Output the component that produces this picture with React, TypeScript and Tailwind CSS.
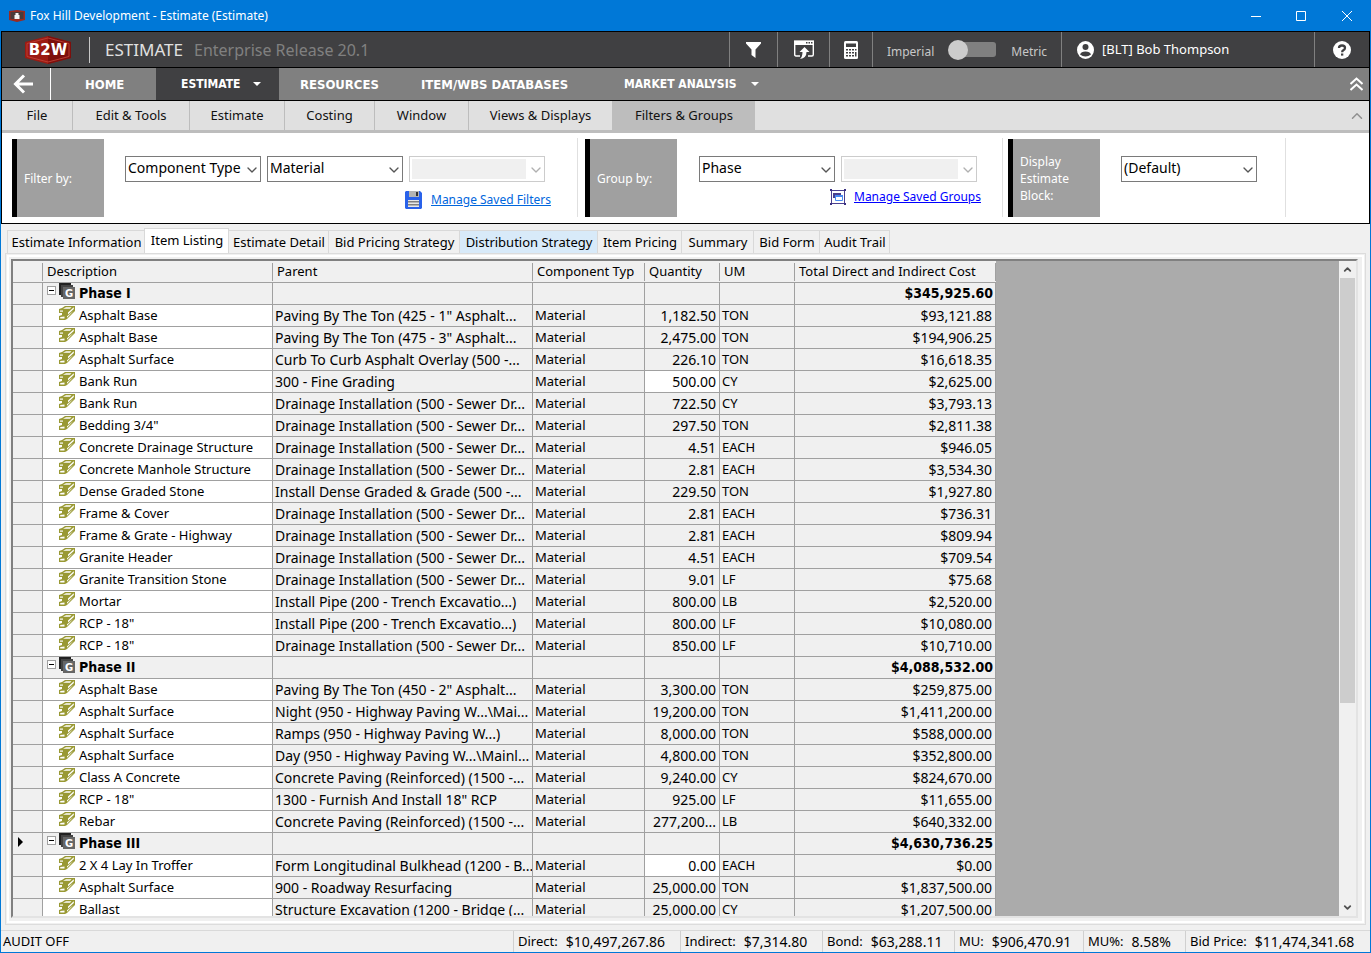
import type { ReactNode } from "react";
import { ChevronDown, ChevronUp } from "lucide-react";

type Item = {
  name: string;
  parent: string;
  qty: string;
  um: string;
  total: string;
  editable?: boolean;
};

type Phase = { name: string; total: string; current?: boolean; items: Item[] };

const SEWER = "Drainage Installation (500 - Sewer Dr...";

const PHASES: Phase[] = [
  {
    name: "Phase I",
    total: "$345,925.60",
    items: [
      { name: "Asphalt Base", parent: 'Paving By The Ton (425 - 1" Asphalt...', qty: "1,182.50", um: "TON", total: "$93,121.88" },
      { name: "Asphalt Base", parent: 'Paving By The Ton (475 - 3" Asphalt...', qty: "2,475.00", um: "TON", total: "$194,906.25" },
      { name: "Asphalt Surface", parent: "Curb To Curb Asphalt Overlay (500 -...", qty: "226.10", um: "TON", total: "$16,618.35" },
      { name: "Bank Run", parent: "300 - Fine Grading", qty: "500.00", um: "CY", total: "$2,625.00", editable: true },
      { name: "Bank Run", parent: SEWER, qty: "722.50", um: "CY", total: "$3,793.13" },
      { name: 'Bedding 3/4"', parent: SEWER, qty: "297.50", um: "TON", total: "$2,811.38" },
      { name: "Concrete Drainage Structure", parent: SEWER, qty: "4.51", um: "EACH", total: "$946.05" },
      { name: "Concrete Manhole Structure", parent: SEWER, qty: "2.81", um: "EACH", total: "$3,534.30" },
      { name: "Dense Graded Stone", parent: "Install Dense Graded & Grade (500 -...", qty: "229.50", um: "TON", total: "$1,927.80" },
      { name: "Frame & Cover", parent: SEWER, qty: "2.81", um: "EACH", total: "$736.31" },
      { name: "Frame & Grate - Highway", parent: SEWER, qty: "2.81", um: "EACH", total: "$809.94" },
      { name: "Granite Header", parent: SEWER, qty: "4.51", um: "EACH", total: "$709.54" },
      { name: "Granite Transition Stone", parent: SEWER, qty: "9.01", um: "LF", total: "$75.68" },
      { name: "Mortar", parent: "Install Pipe (200 - Trench Excavatio...)", qty: "800.00", um: "LB", total: "$2,520.00" },
      { name: 'RCP - 18"', parent: "Install Pipe (200 - Trench Excavatio...)", qty: "800.00", um: "LF", total: "$10,080.00" },
      { name: 'RCP - 18"', parent: SEWER, qty: "850.00", um: "LF", total: "$10,710.00" },
    ],
  },
  {
    name: "Phase II",
    total: "$4,088,532.00",
    items: [
      { name: "Asphalt Base", parent: 'Paving By The Ton (450 - 2" Asphalt...', qty: "3,300.00", um: "TON", total: "$259,875.00" },
      { name: "Asphalt Surface", parent: "Night (950 - Highway Paving W...\\Mai...", qty: "19,200.00", um: "TON", total: "$1,411,200.00" },
      { name: "Asphalt Surface", parent: "Ramps (950 - Highway Paving W...)", qty: "8,000.00", um: "TON", total: "$588,000.00" },
      { name: "Asphalt Surface", parent: "Day (950 - Highway Paving W...\\Mainl...", qty: "4,800.00", um: "TON", total: "$352,800.00" },
      { name: "Class A Concrete", parent: "Concrete Paving (Reinforced) (1500 -...", qty: "9,240.00", um: "CY", total: "$824,670.00" },
      { name: 'RCP - 18"', parent: '1300 - Furnish And Install 18" RCP', qty: "925.00", um: "LF", total: "$11,655.00" },
      { name: "Rebar", parent: "Concrete Paving (Reinforced) (1500 -...", qty: "277,200...", um: "LB", total: "$640,332.00" },
    ],
  },
  {
    name: "Phase III",
    total: "$4,630,736.25",
    current: true,
    items: [
      { name: "2 X 4 Lay In Troffer", parent: "Form Longitudinal Bulkhead (1200 - B...", qty: "0.00", um: "EACH", total: "$0.00", editable: true },
      { name: "Asphalt Surface", parent: "900 - Roadway Resurfacing", qty: "25,000.00", um: "TON", total: "$1,837,500.00" },
      { name: "Ballast", parent: "Structure Excavation (1200 - Bridge (...", qty: "25,000.00", um: "CY", total: "$1,207,500.00" },
    ],
  },
];

const RIBBON = [
  { label: "File", width: "w-[71px]" },
  { label: "Edit & Tools", width: "w-[117px]" },
  { label: "Estimate", width: "w-[95px]" },
  { label: "Costing", width: "w-[90px]" },
  { label: "Window", width: "w-[94px]" },
  { label: "Views & Displays", width: "w-[144px]" },
];

const TABS = [
  { label: "Estimate Detail", width: "w-[100px]" },
  { label: "Bid Pricing Strategy", width: "w-[131px]" },
  { label: "Distribution Strategy", width: "w-[138px]", hot: true },
  { label: "Item Pricing", width: "w-[84px]" },
  { label: "Summary", width: "w-[72px]" },
  { label: "Bid Form", width: "w-[66px]" },
  { label: "Audit Trail", width: "w-[70px]" },
];

const TOTALS = [
  { label: "Direct:", value: "$10,497,267.86", width: "w-[167px]" },
  { label: "Indirect:", value: "$7,314.80", width: "w-[142px]" },
  { label: "Bond:", value: "$63,288.11", width: "w-[132px]" },
  { label: "MU:", value: "$906,470.91", width: "w-[129px]" },
  { label: "MU%:", value: "8.58%", width: "w-[102px]" },
  { label: "Bid Price:", value: "$11,474,341.68", width: "w-[185px]" },
];

function Logo() {
  return (
    <svg width="48" height="28" viewBox="0 0 48 28" aria-label="B2W">
      <path d="M24 0 L47 6 V22 L24 28 L1 22 V6 Z" fill="#9c1a12" />
      <path d="M24 0 L47 6 V22 L24 28 Z" fill="#7d0f0c" />
      <path d="M24 2 L45 7.500 V20.500 L24 26 L3 20.500 V7.500 Z" fill="none" stroke="#c4463a" strokeWidth="0.8" />
      <text x="24" y="19" textAnchor="middle" fontSize="15" fontWeight="700" fill="#fff" fontFamily="DejaVu Sans, sans-serif">
        B2W
      </text>
    </svg>
  );
}

function MaterialIcon() {
  return (
    <svg width="16" height="14" viewBox="0 0 16 14" className="shrink-0">
      <path d="M3 2 L6 0 H16 V5 L8 13 L6 14 H0 V10 L3 9 V7 H0 V3 Z" fill="#999933" />
      <path d="M4 2.700 L7 1.200 H12.500 L11 2.700 Z" fill="#fff" />
      <path d="M14.800 1.200 V3 L9 8.500 V6.500 Z" fill="#fff" />
      <path d="M14.800 4.700 L8 11.800 V10.300 Z" fill="#fff" />
      <path d="M1.200 11 L5.500 10.500 V12.500 H1.200 Z" fill="#fff" />
      <path d="M1 4.500 H4 V5.700 H1 Z" fill="#fff" />
    </svg>
  );
}

function GroupIcon() {
  return (
    <svg width="16" height="16" viewBox="0 0 16 16" className="shrink-0">
      <path d="M0 0 H12 V12 H0 Z" fill="#222" />
      <path d="M2 2 H14 V14 H2 Z" fill="#444" />
      <path d="M4 4 H16 V16 H4 Z" fill="#666" />
      <text x="10" y="14" textAnchor="middle" fontSize="10" fontWeight="700" fill="#fff" fontFamily="DejaVu Sans, sans-serif">
        G
      </text>
    </svg>
  );
}

function Caret() {
  return (
    <svg width="8" height="4" viewBox="0 0 8 4" fill="#fff">
      <path d="M0 0 H8 L4 4 Z" />
    </svg>
  );
}

function Combo({ label, value, disabled }: { label: string; value?: string; disabled?: boolean }) {
  return (
    <div
      className={`relative h-[26px] w-[136px] border bg-white ${disabled ? "border-[#cccccc] p-[2px]" : "border-[#7a7a7a]"}`}
    >
      <select
        aria-label={label}
        disabled={disabled}
        className={`block h-full appearance-none pl-[2px] text-[14px] leading-5 outline-none ${
          disabled ? "w-[114px] bg-[#f0f0f0]" : "w-full bg-white pb-[2px] text-black"
        }`}
      >
        <option>{value}</option>
      </select>
      <ChevronDown
        size={16}
        strokeWidth={2}
        className={`pointer-events-none absolute right-0 top-[5px] ${disabled ? "text-[#b0b0b0]" : "text-[#555555]"}`}
      />
    </div>
  );
}

function BlockLabel({ children }: { children: ReactNode }) {
  return (
    <div className="flex h-[78px] w-[92px] shrink-0 items-center border-l-[5px] border-black bg-[#a0a0a0] pl-[7px] pr-4 text-[12px] leading-[17px] text-white">
      {children}
    </div>
  );
}

function HeaderCell({ children }: { children?: ReactNode }) {
  return (
    <th className="border-b border-[#a0a0a0] p-0 text-left align-top font-normal">
      <div className="mt-[2px] h-[18px] overflow-hidden whitespace-nowrap border-r border-[#a0a0a0] pl-1 leading-[17px]">{children}</div>
    </th>
  );
}

const cell = "overflow-hidden whitespace-nowrap border-b border-r border-[#a0a0a0] p-0";

function PhaseRows({ phase }: { phase: Phase }) {
  return (
    <>
      <tr className="h-[22px] font-['DejaVu_Sans_Condensed','DejaVu_Sans',sans-serif] text-[14px] font-bold">
        <td className={cell}>
          {phase.current && (
            <svg width="5" height="10" viewBox="0 0 5 10" className="mb-[3px] ml-[5px]">
              <path d="M0 0 L5 5 L0 10 Z" />
            </svg>
          )}
        </td>
        <td className={cell}>
          <div className="flex h-[21px] items-start pl-1">
            <button
              aria-label={`Collapse ${phase.name}`}
              className="mt-[3px] flex h-[9px] w-[9px] items-center justify-center border border-[#a0a0a0] bg-white"
            >
              <span className="h-px w-[5px] bg-black" />
            </button>
            <span className="ml-[3px]">
              <GroupIcon />
            </span>
            <span className="ml-1 leading-[21px]">{phase.name}</span>
          </div>
        </td>
        <td className={cell} />
        <td className={cell} />
        <td className={cell} />
        <td className={cell} />
        <td className={`${cell} pr-[2px] text-right`}>{phase.total}</td>
      </tr>
      {phase.items.map((item, i) => (
        <tr key={i} className="h-[22px]">
          <td className={cell} />
          <td className={`${cell} bg-white`}>
            <div className="flex h-[21px] items-start pl-4">
              <span className="mt-px">
                <MaterialIcon />
              </span>
              <span className="ml-1 leading-[21px]">{item.name}</span>
            </div>
          </td>
          <td className={`${cell} pl-[2px] text-[14px]`}>{item.parent}</td>
          <td className={`${cell} pl-[2px]`}>Material</td>
          <td className={`${cell} pr-[3px] text-right text-[14px] ${item.editable ? "bg-white" : ""}`}>{item.qty}</td>
          <td className={`${cell} pl-[2px]`}>{item.um}</td>
          <td className={`${cell} pr-[3px] text-right text-[14px]`}>{item.total}</td>
        </tr>
      ))}
    </>
  );
}

function TitleBar() {
  return (
    <header className="flex h-[31px] shrink-0 items-center bg-[#0078d7] pl-2 text-[12px] text-white">
      <svg width="16" height="12" viewBox="0 0 16 12">
        <path d="M0 1 L8 0 L16 1 V10 L8 12 L0 10 Z" fill="#9b2a20" />
        <path d="M1.500 2 H14.500 V9 H1.500 Z" fill="#4a3a3a" />
        <path d="M5.500 5 H10.500 V9 H5.500 Z M6.500 3 H9.500 V5 H6.500 Z" fill="#f4f4f4" />
      </svg>
      <h1 className="ml-[5px] flex-1">Fox Hill Development - Estimate (Estimate)</h1>
      <div className="flex">
        <button aria-label="Minimize" className="flex h-[30px] w-[45px] items-center justify-center">
          <svg width="10" height="10" stroke="#fff">
            <path d="M0 5.500 H10" />
          </svg>
        </button>
        <button aria-label="Maximize" className="flex h-[30px] w-[46px] items-center justify-center">
          <svg width="10" height="10" stroke="#fff" fill="none">
            <path d="M0.500 0.500 H9.500 V9.500 H0.500 Z" />
          </svg>
        </button>
        <button aria-label="Close" className="flex h-[30px] w-[46px] items-center justify-center">
          <svg width="10" height="10" stroke="#fff">
            <path d="M0 0 L10 10 M10 0 L0 10" />
          </svg>
        </button>
      </div>
    </header>
  );
}

function ProductBar() {
  const divider = "flex items-center justify-center border-l border-[#808080]";
  return (
    <div className="flex h-[37px] shrink-0 border-y border-black bg-[#404042] text-[#e0e0e0]">
      <div className="flex flex-1 items-center pl-[22px]">
        <Logo />
        <div className="ml-[17px] h-[26px] w-px bg-[#c8c8c8]" />
        <span className="ml-[15px] text-[17px]">ESTIMATE</span>
        <span className="ml-[11px] text-[16px] text-[#808080]">Enterprise Release 20.1</span>
      </div>
      <button aria-label="Filter" className={`${divider} w-[48px]`}>
        <svg width="15" height="16" viewBox="0 0 15 16" fill="#fff">
          <path d="M0 0 H15 V1.500 L9.500 7.500 V16 L5.500 13 V7.500 L0 1.500 Z" />
        </svg>
      </button>
      <button aria-label="Switch window" className={`${divider} w-[52px]`}>
        <svg width="20" height="19" viewBox="0 0 20 19">
          <path d="M6 16 H2 Q0.700 16 0.700 14.500 V1.500 H19.300 V14.500 Q19.300 16 18 16 H14" fill="none" stroke="#fff" strokeWidth="1.4" />
          <path d="M0 0.500 H20 V5 H0 Z" fill="#fff" />
          <path d="M12 2 H13.500 V3.500 H12 Z M14.500 2 H16 V3.500 H14.500 Z M17 2 H18.500 V3.500 H17 Z" fill="#404042" />
          <path d="M10.500 7 L15.500 12 H12.500 Q12.500 18 6 19 Q8.500 17 8.500 12 H5.500 Z" fill="#fff" />
        </svg>
      </button>
      <button aria-label="Calculator" className={`${divider} w-[43px]`}>
        <svg width="14" height="18" viewBox="0 0 14 18">
          <rect width="14" height="18" rx="1.5" fill="#fff" />
          <path
            d="M2 2.500 H12 V6 H2 Z M2 8 H4 V9.500 H2 Z M5 8 H7 V9.500 H5 Z M8 8 H10 V9.500 H8 Z M2 11 H4 V12.500 H2 Z M5 11 H7 V12.500 H5 Z M8 11 H10 V12.500 H8 Z M2 14 H4 V15.500 H2 Z M5 14 H7 V15.500 H5 Z M8 14 H10 V15.500 H8 Z M11 8 H12.500 V9.500 H11 Z M11 11 H12.500 V15.500 H11 Z"
            fill="#404042"
          />
        </svg>
      </button>
      <div className={`${divider} w-[189px] text-[12px] text-[#c8c8c8]`}>
        <span className="pt-1">Imperial</span>
        <button role="switch" aria-checked={false} aria-label="Metric units" className="ml-[14px] mr-[15px] flex h-5 w-[48px] items-center">
          <span className="z-10 h-5 w-5 rounded-full bg-[#cccccc]" />
          <span className="-ml-3 h-[15px] flex-1 rounded-[3px] bg-[#808080]" />
        </button>
        <span className="pt-1">Metric</span>
      </div>
      <button className="flex w-[253px] items-center border-l border-[#808080] pl-[15px] text-white">
        <svg width="17" height="18" viewBox="0 0 17 18">
          <ellipse cx="8.500" cy="9" rx="8.500" ry="9" fill="#fff" />
          <circle cx="8.500" cy="6" r="3" fill="#404042" />
          <path d="M3 13.500 Q4 10.500 8.500 10.500 Q13 10.500 14 13.500 Q11.500 15.500 8.500 15.500 Q5.500 15.500 3 13.500 Z" fill="#404042" />
        </svg>
        <span className="ml-2 pt-px text-[13px]">[BLT] Bob Thompson</span>
      </button>
      <button aria-label="Help" className={`${divider} w-[55px]`}>
        <svg width="18" height="18" viewBox="0 0 18 18">
          <circle cx="9" cy="9" r="9" fill="#fff" />
          <path d="M6 7 Q6 4.500 9 4.500 Q12 4.500 12 7 Q12 8.500 10 9.500 Q9.200 10 9.200 11.300" fill="none" stroke="#404042" strokeWidth="2.300" />
          <path d="M8 12.500 H10.300 V14.600 H8 Z" fill="#404042" />
        </svg>
      </button>
    </div>
  );
}

function MainNav() {
  return (
    <nav className="flex h-[33px] shrink-0 items-center border-b border-black bg-[#808080] font-['DejaVu_Sans_Condensed','DejaVu_Sans',sans-serif] text-[13px] font-bold text-white">
      <button aria-label="Back" className="flex h-full w-[49px] items-center border-r border-white pl-[11px]">
        <svg width="20" height="20" viewBox="0 0 20 20" fill="none" stroke="#fff" strokeWidth="3">
          <path d="M20 10 H3 M11 1.500 L2.500 10 L11 18.500" />
        </svg>
      </button>
      <a href="#home" className="w-[105px] pl-[34px] pt-px">HOME</a>
      <a href="#estimate" className="flex h-full w-[123px] items-center bg-[#404042] pl-[25px] text-[12px]">
        <span className="w-[72px]">ESTIMATE</span>
        <Caret />
      </a>
      <a href="#resources" className="w-[142px] pl-[21px] pt-px">RESOURCES</a>
      <a href="#databases" className="w-[203px] whitespace-nowrap pt-px">ITEM/WBS DATABASES</a>
      <a href="#market" className="flex items-center text-[12px]">
        <span className="w-[127px] whitespace-nowrap">MARKET ANALYSIS</span>
        <Caret />
      </a>
      <button aria-label="Hide navigation" className="ml-auto mr-[6px]">
        <svg width="13" height="14" viewBox="0 0 13 14" fill="none" stroke="#fff" strokeWidth="2">
          <path d="M0.500 7 L6.500 1.500 L12.500 7 M0.500 13 L6.500 7.500 L12.500 13" />
        </svg>
      </button>
    </nav>
  );
}

function Ribbon() {
  return (
    <>
      <div className="flex h-8 shrink-0 border-b-[3px] border-[#bdbdbd] bg-[#e0e0e0] text-[13px] text-[#111111]">
        {RIBBON.map((tab) => (
          <button key={tab.label} className={`${tab.width} border-r border-[#bdbdbd]`}>
            {tab.label}
          </button>
        ))}
        <button className="w-[142px] bg-[#bdbdbd]">Filters & Groups</button>
        <button aria-label="Collapse ribbon" className="ml-auto mr-[3px]">
          <ChevronUp size={18} className="text-[#909090]" />
        </button>
      </div>
      <div className="flex h-[91px] shrink-0 border-b border-black bg-white pl-[10px] pt-[5px]">
        <div className="flex h-[79px] w-[566px] items-end border-r border-[#e0e0e0]">
          <BlockLabel>Filter by:</BlockLabel>
          <div className="ml-[21px] flex h-[61px] flex-col">
            <div className="flex gap-[6px]">
              <Combo label="Filter field" value="Component Type" />
              <Combo label="Filter value" value="Material" />
              <Combo label="Filter detail" disabled />
            </div>
            <div className="mt-2 flex items-center pl-[280px] text-[12px]">
              <svg width="17" height="18" viewBox="0 0 17 18">
                <path d="M1 0 H15 L17 2 V17 L16 18 H1 L0 17 V1 Z" fill="#2962ea" />
                <path d="M4 0 H14 V6 H4 Z" fill="#b4b4b4" />
                <path d="M11 1 H13 V5 H11 Z" fill="#333" />
                <path d="M3 9 H14 V16 H3 Z" fill="#e8e8e8" />
                <path d="M3 10 H14 V11.500 H3 Z M3 13 H14 V14.500 H3 Z" fill="#808080" />
              </svg>
              <a href="#filters" className="ml-[9px] pt-px text-[#0066dd] underline">Manage Saved Filters</a>
            </div>
          </div>
        </div>
        <div className="flex h-[79px] w-[425px] items-end border-r border-[#e0e0e0] pl-[7px]">
          <BlockLabel>Group by:</BlockLabel>
          <div className="ml-[22px] flex h-[61px] flex-col">
            <div className="flex gap-[6px]">
              <Combo label="Group field" value="Phase" />
              <Combo label="Group detail" disabled />
            </div>
            <div className="mt-[6px] flex items-center pl-[131px] text-[12px]">
              <svg width="16" height="16" viewBox="0 0 16 16" fill="none">
                <path d="M1.500 1.500 H14.500 V14.500 H1.500 Z" fill="#fff" stroke="#4a3f8f" />
                <path d="M0 0 H2 V2 H0 Z M14 0 H16 V2 H14 Z M0 14 H2 V16 H0 Z M14 14 H16 V16 H14 Z" fill="#3a2f80" />
                <path d="M3 4 H11 V9 H3 Z" fill="#4a3f8f" />
                <path d="M5.500 6.500 H12.500 V11.500 H5.500 Z" fill="#fff" stroke="#4a8af0" />
                <path d="M5 6 H13 V8 H5 Z" fill="#4a8af0" />
              </svg>
              <a href="#groups" className="ml-2 text-[#0000ff] underline">Manage Saved Groups</a>
            </div>
          </div>
        </div>
        <div className="flex h-[79px] w-[283px] items-end border-r border-[#e0e0e0] pl-[5px]">
          <BlockLabel>Display Estimate Block:</BlockLabel>
          <div className="ml-[21px] h-[61px]">
            <Combo label="Display estimate block" value="(Default)" />
          </div>
        </div>
      </div>
    </>
  );
}

function EstimateGrid() {
  return (
    <div className="flex min-h-0 flex-1 border-2 border-b-[#e3e3e3] border-l-[#808080] border-r-[#e3e3e3] border-t-[#808080] bg-[#ababab]">
      <div className="min-w-0 flex-1 overflow-hidden">
        <table className="w-[983px] table-fixed border-separate border-spacing-0 bg-[#f0f0f0] leading-[21px]">
          <colgroup>
            <col className="w-[30px]" />
            <col className="w-[230px]" />
            <col className="w-[260px]" />
            <col className="w-[112px]" />
            <col className="w-[75px]" />
            <col className="w-[75px]" />
            <col className="w-[201px]" />
          </colgroup>
          <thead>
            <tr className="h-[22px]">
              <HeaderCell />
              <HeaderCell>Description</HeaderCell>
              <HeaderCell>Parent</HeaderCell>
              <HeaderCell>Component Typ</HeaderCell>
              <HeaderCell>Quantity</HeaderCell>
              <HeaderCell>UM</HeaderCell>
              <HeaderCell>Total Direct and Indirect Cost</HeaderCell>
            </tr>
          </thead>
          <tbody>
            {PHASES.map((phase) => (
              <PhaseRows key={phase.name} phase={phase} />
            ))}
          </tbody>
        </table>
      </div>
      <div className="flex w-[17px] flex-col items-center bg-[#f0f0f0] text-[#505050]">
        <ChevronUp size={11} strokeWidth={4} className="my-[3px] shrink-0" />
        <div className="h-[425px] w-[15px] bg-[#cdcdcd]" />
        <ChevronDown size={11} strokeWidth={4} className="mb-[3px] mt-auto shrink-0" />
      </div>
    </div>
  );
}

export default function App() {
  return (
    <div className="flex h-screen flex-col overflow-hidden border-x border-b border-[#0078d7] bg-[#f0f0f0] font-['Noto_Sans',sans-serif] text-[13px] text-black">
      <TitleBar />
      <div className="shrink-0 border-x border-black">
        <ProductBar />
        <MainNav />
        <Ribbon />
      </div>

      <main className="flex min-h-0 flex-1 flex-col px-1 pt-1">
        <div role="tablist" className="flex h-[25px] shrink-0 items-end pl-[2px]">
          <button role="tab" className="h-[23px] w-[137px] whitespace-nowrap border-l border-t border-[#d9d9d9] pl-px pt-px">
            Estimate Information
          </button>
          <button role="tab" aria-selected className="h-[25px] w-[85px] whitespace-nowrap border-x border-t border-[#d9d9d9] bg-white pb-px pl-px">
            Item Listing
          </button>
          {TABS.map((tab) => (
            <button
              key={tab.label}
              role="tab"
              className={`${tab.width} h-[23px] whitespace-nowrap border-r border-t border-[#d9d9d9] pl-px pt-px ${tab.hot ? "bg-[#d8eaf9]" : ""}`}
            >
              {tab.label}
            </button>
          ))}
        </div>
        <div className="flex min-h-0 flex-1 flex-col border border-[#dcdcdc] bg-[#f0f0f0] p-px">
          <div className="flex min-h-0 flex-1 flex-col border-2 border-white pb-[3px] pl-[2px] pr-1 pt-[2px]">
            <EstimateGrid />
          </div>
        </div>
      </main>

      <footer className="mt-[5px] flex h-[22px] shrink-0 items-center border-t border-[#d9d9d9]">
        <span className="flex-1 pl-[2px]">AUDIT OFF</span>
        {TOTALS.map((t) => (
          <span key={t.label} className={`${t.width} flex h-full items-center gap-2 whitespace-nowrap border-l border-[#d0d0d0] pl-1`}>
            <span>{t.label}</span>
            <span className="text-[14px]">{t.value}</span>
          </span>
        ))}
      </footer>
    </div>
  );
}
